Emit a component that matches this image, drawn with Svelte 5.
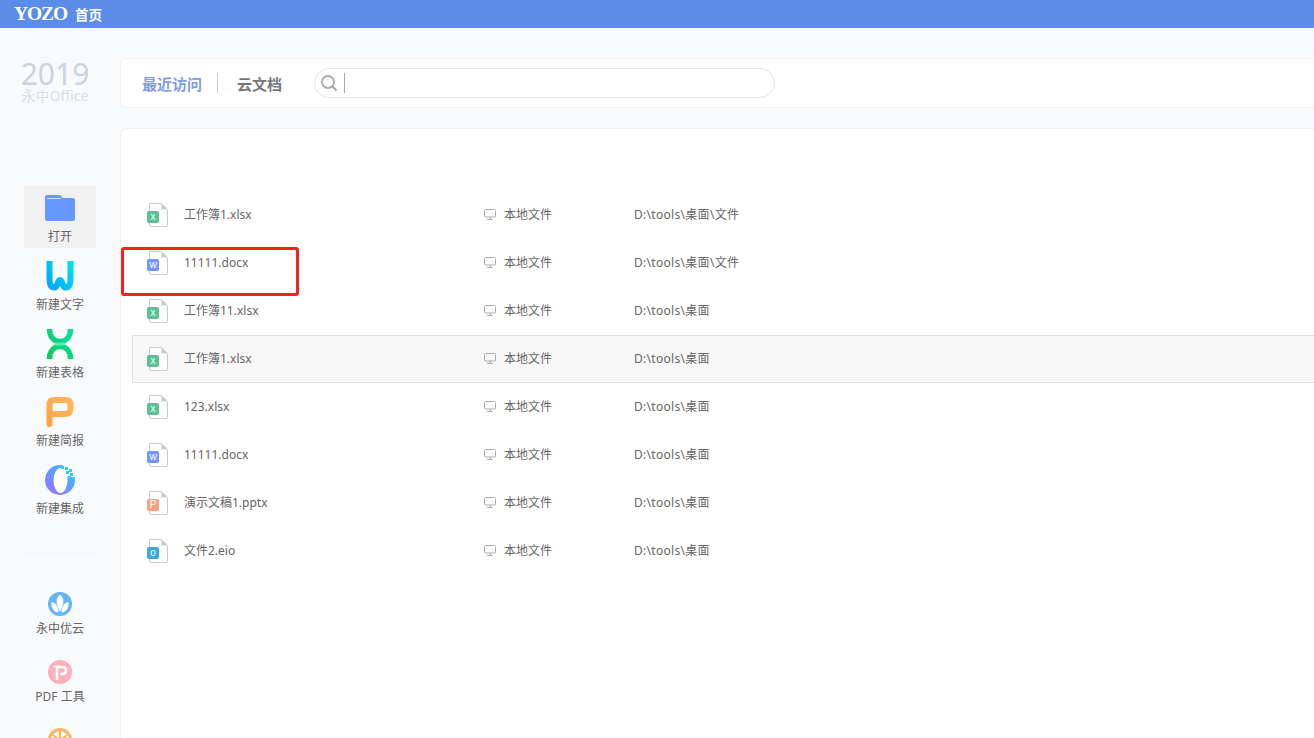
<script>
	const files = [
		{ name: '工作簿1.xlsx', path: 'D:\\tools\\桌面\\文件', kind: 'x' },
		{ name: '11111.docx', path: 'D:\\tools\\桌面\\文件', kind: 'w' },
		{ name: '工作簿11.xlsx', path: 'D:\\tools\\桌面', kind: 'x' },
		{ name: '工作簿1.xlsx', path: 'D:\\tools\\桌面', kind: 'x', hover: true },
		{ name: '123.xlsx', path: 'D:\\tools\\桌面', kind: 'x' },
		{ name: '11111.docx', path: 'D:\\tools\\桌面', kind: 'w' },
		{ name: '演示文稿1.pptx', path: 'D:\\tools\\桌面', kind: 'p' },
		{ name: '文件2.eio', path: 'D:\\tools\\桌面', kind: 'o' }
	];
	const badge = {
		x: { color: '#5dbf95', letter: 'x' },
		w: { color: '#7296fb', letter: 'w' },
		p: { color: '#ff9f7f', letter: 'P' },
		o: { color: '#3ba9e0', letter: 'o' }
	};
</script>

<div class="page">
	<header class="topbar">
		<span class="logo">YOZO</span>
		<span class="home">首页</span>
	</header>

	<div class="body">
		<aside class="side">
			<div class="brand">
				<div class="year">2019</div>
				<div class="brand-name">永中Office</div>
			</div>

			<div class="side-item open">
				<svg width="30" height="26" viewBox="0 0 30 26">
					<path d="M2 0H14Q17 0 17 3H28Q30 3 30 5V24Q30 26 28 26H2Q0 26 0 24V2Q0 0 2 0Z" fill="#6699ff" />
					<path d="M2 3.5H16" stroke="#cfe0ff" stroke-width="1" />
				</svg>
				<span>打开</span>
			</div>
			<div class="side-item">
				<svg width="28" height="30" viewBox="0 0 28 30">
					<defs>
						<linearGradient id="gw" x1="0" y1="1" x2="1" y2="0">
							<stop offset="0" stop-color="#00a8ff" />
							<stop offset="1" stop-color="#00e0e8" />
						</linearGradient>
					</defs>
					<path d="M3.5 0V18C3.5 24 5.5 26.5 8.5 26.5C12 26.5 11 19 14 19C17 19 16 26.5 19.5 26.5C22.5 26.5 24.5 24 24.5 18V0" fill="none" stroke="url(#gw)" stroke-width="6" />
				</svg>
				<span>新建文字</span>
			</div>
			<div class="side-item">
				<svg width="28" height="30" viewBox="0 0 28 30">
					<defs>
						<linearGradient id="gx" x1="0" y1="1" x2="1" y2="0">
							<stop offset="0" stop-color="#12c95a" />
							<stop offset="1" stop-color="#08e0a0" />
						</linearGradient>
					</defs>
					<path d="M3.5 0C3.5 8 8 12.5 14 12.5C20 12.5 24.5 8 24.5 0M3.5 30C3.5 22 8 17.5 14 17.5C20 17.5 24.5 22 24.5 30" fill="none" stroke="url(#gx)" stroke-width="5.5" />
					<path d="M9 15H19" stroke="#5fe8b4" stroke-width="3" />
				</svg>
				<span>新建表格</span>
			</div>
			<div class="side-item">
				<svg width="28" height="30" viewBox="0 0 28 30">
					<defs>
						<linearGradient id="gp" x1="0" y1="1" x2="1" y2="0">
							<stop offset="0" stop-color="#ffa346" />
							<stop offset="1" stop-color="#ffb65c" />
						</linearGradient>
					</defs>
					<path d="M3.5 27V8Q3.5 3 8 3H20Q24.5 3 24.5 8V11Q24.5 17 19 17H3.5" fill="none" stroke="url(#gp)" stroke-width="6" stroke-linecap="round" />
				</svg>
				<span>新建简报</span>
			</div>
			<div class="side-item">
				<svg width="30" height="30" viewBox="0 0 30 30">
					<defs>
						<linearGradient id="go" x1="0" y1="1" x2="1" y2="0">
							<stop offset="0" stop-color="#a06cff" />
							<stop offset="1" stop-color="#2bc8ff" />
						</linearGradient>
					</defs>
					<circle cx="15" cy="15" r="15" fill="url(#go)" />
					<ellipse cx="15.5" cy="15.5" rx="7" ry="12.5" fill="#fff" />
					<path d="M18 0h12v12h-12z" fill="#f9fafc" />
					<path d="M16 1h3v3h-3zM20 2h3v3h-3zM24 4h3v3h-3zM21 6h3v3h-3zM25 8h3v3h-3zM23 11h3v3h-3zM27 12h3v3h-3z" fill="#35c4fb" />
				</svg>
				<span>新建集成</span>
			</div>

			<div class="side-rule"></div>

			<div class="side-item small">
				<svg width="24" height="24" viewBox="0 0 24 24">
					<circle cx="12" cy="12" r="12" fill="#64b5f6" />
					<path d="M12 2.5C16.5 6 16.5 11 12 20C7.5 11 7.5 6 12 2.5Z" fill="#fff" />
					<path d="M3.5 10C8 10.5 10.5 15 10.5 20.5C6.5 20.5 2.5 16 3.5 10Z" fill="#fff" />
					<path d="M20.5 10C16 10.5 13.5 15 13.5 20.5C17.5 20.5 21.5 16 20.5 10Z" fill="#fff" />
				</svg>
				<span>永中优云</span>
			</div>
			<div class="side-item small">
				<svg width="24" height="24" viewBox="0 0 24 24">
					<circle cx="12" cy="12" r="12" fill="#ffb0ba" />
					<path d="M9 20V7H14.5Q18 7 18 10.5Q18 14 14.5 14H12" fill="none" stroke="#fff" stroke-width="2.6" />
					<path d="M5 6.5H11" stroke="#fff" stroke-width="1.4" />
				</svg>
				<span>PDF 工具</span>
			</div>
			<div class="side-item small">
				<svg width="24" height="24" viewBox="0 0 24 24">
					<circle cx="12" cy="12" r="12" fill="#ffb35c" />
					<circle cx="12" cy="12" r="9" fill="#fff" />
					<path d="M12 12V3M12 12L4.5 7M12 12L19.5 7" stroke="#ffb35c" stroke-width="2" />
				</svg>
			</div>
		</aside>

		<main class="main">
			<nav class="tabs">
				<span class="tab active">最近访问</span>
				<span class="tab-sep"></span>
				<span class="tab">云文档</span>
				<div class="search">
					<svg width="18" height="18" viewBox="0 0 18 18">
						<circle cx="8" cy="8" r="6" fill="none" stroke="#aaa" stroke-width="1.8" />
						<path d="M12.5 12.5L16.5 16.5" stroke="#aaa" stroke-width="2" />
					</svg>
					<span class="caret"></span>
				</div>
			</nav>

			<section class="panel">
				{#each files as f}
					<div class="row" class:hover={f.hover}>
						<svg class="ficon" width="22" height="24" viewBox="0 0 22 24">
							<path d="M2.5 .5H14.5L20.5 6.5V22Q20.5 23.5 19 23.5H4Q2.5 23.5 2.5 22Z" fill="#fff" stroke="#cbcbcb" />
							<path d="M14.5 .5V6.5H20.5Z" fill="#cbcbcb" />
							<rect x="0" y="8" width="12" height="12" rx="2" fill={badge[f.kind].color} />
							<text x="6" y="17" text-anchor="middle" class="letter">{badge[f.kind].letter}</text>
						</svg>
						<span class="name">{f.name}</span>
						<span class="loc">
							<svg width="12" height="11" viewBox="0 0 12 11">
								<rect x=".5" y=".5" width="11" height="7.5" rx="1" fill="none" stroke="#aaa" />
								<path d="M6 8V10M3 10.5H9" stroke="#aaa" />
							</svg>
							本地文件
						</span>
						<span class="path">{f.path}</span>
					</div>
				{/each}
			</section>
		</main>
	</div>

	<div class="mark"></div>
</div>

<style>
	:global(body) {
		margin: 0;
		background: #f9fafc;
	}

	.page {
		position: relative;
		height: 738px;
		overflow: hidden;
		font-family: "Noto Sans", "Noto Sans CJK SC", sans-serif;
		color: #666;
		background: #f9fafc;
	}

	.topbar {
		height: 28px;
		background: #5b8de8;
		display: flex;
		align-items: center;
		padding-left: 14px;
		color: #fff;
	}
	.logo {
		font-family: "Liberation Serif", serif;
		font-weight: bold;
		font-size: 19.5px;
		width: 61px;
		letter-spacing: -1.1px;
	}
	.home {
		font-size: 13.5px;
		font-weight: bold;
	}

	.body {
		display: flex;
	}

	.side {
		width: 120px;
		flex: none;
		display: flex;
		flex-direction: column;
		align-items: center;
	}
	.brand {
		margin-top: 32px;
		margin-right: 10px;
		height: 126px;
		text-align: center;
	}
	.year {
		font-size: 30px;
		line-height: 28px;
		color: #ccd3de;
	}
	.brand-name {
		font-size: 14px;
		line-height: 14px;
		margin-top: 1px;
		color: #d9dee7;
	}
	.side-item {
		width: 72px;
		height: 62px;
		margin-bottom: 6px;
		display: flex;
		flex-direction: column;
		align-items: center;
		font-size: 12px;
		line-height: 16px;
		color: #666;
		flex: none;
	}
	.side-item svg {
		margin-top: 7px;
		margin-bottom: 6px;
	}
	.side-item.open {
		background: #f1f1f1;
	}
	.side-item.open svg {
		margin-top: 9px;
		margin-bottom: 8px;
	}
	.side-item.small svg {
		margin-top: 10px;
		margin-bottom: 5px;
	}
	.side-rule {
		width: 72px;
		height: 1px;
		background: #f4f5f7;
		margin-top: 27px;
		margin-bottom: 28px;
		flex: none;
	}

	.main {
		flex: 1;
		min-width: 0;
		padding-top: 30px;
	}

	.tabs {
		height: 48px;
		display: flex;
		align-items: center;
		background: #fff;
		border: 1px solid #f0f1f4;
		border-right: 0;
		border-radius: 6px 0 0 6px;
		padding-left: 21px;
	}
	.tab {
		font-size: 15px;
		font-weight: 700;
		color: #777;
	}
	.tab.active {
		color: #7f9be9;
	}
	.tab-sep {
		width: 1px;
		height: 20px;
		background: #ccc;
		margin: 0 19px 0 15px;
	}
	.search {
		width: 454px;
		height: 28px;
		margin-left: 32px;
		border: 1px solid #e6e6e6;
		border-radius: 15px;
		display: flex;
		align-items: center;
		padding-left: 5px;
	}
	.caret {
		width: 1px;
		height: 20px;
		background: #aaa;
		margin-left: 6px;
	}

	.panel {
		margin-top: 20px;
		height: 640px;
		background: #fff;
		border: 1px solid #f0f1f4;
		border-right: 0;
		border-radius: 6px 0 0 0;
		padding: 62px 0 0 11px;
		box-sizing: border-box;
	}

	.row {
		height: 48px;
		box-sizing: border-box;
		display: grid;
		grid-template-columns: 52px 300px 150px 1fr;
		align-items: center;
		border: 1px solid transparent;
		border-right: 0;
		font-size: 12px;
		color: #666;
	}
	.row.hover {
		background: #f8f8f8;
		border-color: #e4e4e4;
	}
	.ficon {
		margin-left: 14px;
	}
	.letter {
		font-family: "Liberation Sans", sans-serif;
		font-size: 10px;
		fill: #fff;
	}
	.name {
		margin-left: -1px;
		padding-bottom: 2px;
	}
	.loc {
		display: flex;
		align-items: center;
		gap: 8px;
		margin-left: -1px;
		padding-bottom: 2px;
	}
	.path {
		margin-left: -1px;
		padding-bottom: 2px;
		letter-spacing: 0.3px;
	}

	.mark {
		position: absolute;
		left: 121px;
		top: 247px;
		width: 172px;
		height: 43px;
		border: 3px solid #f5231c;
		border-radius: 3px;
	}
</style>
